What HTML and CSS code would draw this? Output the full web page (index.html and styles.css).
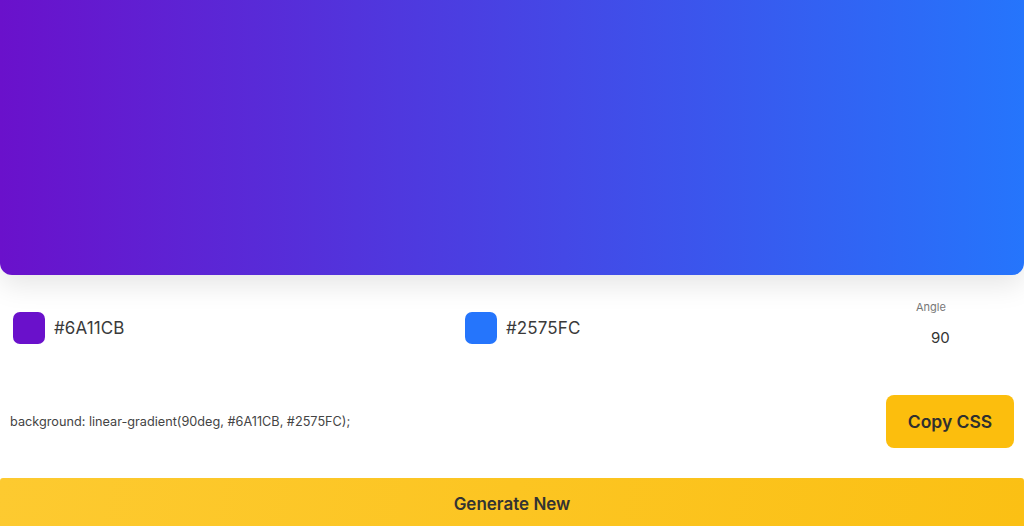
FILE: index.html
```html
<!DOCTYPE html>
<html lang="en">
<head>
<meta charset="utf-8">
<title>Gradient Generator</title>
<link rel="stylesheet" href="styles.css">
</head>
<body>
<div class="app">
  <div class="preview"></div>
  <div class="controls">
    <div class="color-item">
      <span class="swatch swatch-a"></span>
      <span class="hex">#6A11CB</span>
    </div>
    <div class="color-item">
      <span class="swatch swatch-b"></span>
      <span class="hex">#2575FC</span>
    </div>
    <div class="angle">
      <label class="angle-label" for="angle">Angle</label>
      <input class="angle-input" id="angle" type="text" value="90">
    </div>
  </div>
  <div class="css-row">
    <code class="css-code">background: linear-gradient(90deg, #6A11CB, #2575FC);</code>
    <button class="copy-btn">Copy CSS</button>
  </div>
  <button class="generate-btn">Generate New</button>
</div>
</body>
</html>
```
FILE: styles.css
```css
* { box-sizing: border-box; }
html, body { margin: 0; padding: 0; background: #ffffff; }
body {
  font-family: Inter, "Noto Sans", "Liberation Sans", sans-serif;
  color: #333;
  overflow: hidden;
}
.app { display: flex; flex-direction: column; width: 1024px; }
.preview {
  height: 275px;
  background: linear-gradient(90deg, #6A11CB, #2575FC);
  border-radius: 0 0 12px 12px;
  box-shadow: 0 10px 28px rgba(0, 0, 0, 0.10);
}
.controls {
  display: grid;
  grid-template-columns: 1fr 1fr 94px;
  column-gap: 0;
  padding: 25px 13px 0 13px;
  align-items: start;
}
.color-item {
  display: flex;
  align-items: center;
  gap: 9px;
  margin-top: 12px;
  width: 452px;
}
.swatch {
  width: 32px;
  height: 32px;
  border-radius: 7px;
  display: block;
}
.swatch-a { background: #6A11CB; }
.swatch-b { background: #2575FC; }
.hex { font-size: 17px; color: #3a3a3a; letter-spacing: 0.1px; }
.angle { display: flex; flex-direction: column; align-items: flex-start; }
.angle-label {
  font-size: 11px;
  line-height: 14px;
  color: #777;
  margin-left: -1px;
}
.angle-input {
  margin-top: 8px;
  width: 64px;
  height: 30px;
  border: none;
  outline: none;
  background: transparent;
  font-family: inherit;
  font-size: 15px;
  color: #333;
  padding: 0 0 0 14px;
}
.css-row {
  display: flex;
  justify-content: space-between;
  align-items: center;
  margin-top: 43px;
  padding: 0 10px;
}
.css-code {
  font-family: Inter, "Noto Sans", "Liberation Sans", sans-serif;
  font-size: 12.7px;
  color: #444;
}
.copy-btn {
  width: 128px;
  height: 53px;
  border: none;
  border-radius: 8px;
  background: #FCBE0D;
  font-family: inherit;
  font-size: 17.5px;
  font-weight: 600;
  color: #2f2f2f;
}
.generate-btn {
  margin-top: 30px;
  height: 52px;
  width: 100%;
  border: none;
  border-radius: 3px 3px 0 0;
  background: linear-gradient(100deg, #FDCA30, #FBC014);
  font-family: inherit;
  font-size: 17px;
  font-weight: 600;
  color: #333;
}
```
